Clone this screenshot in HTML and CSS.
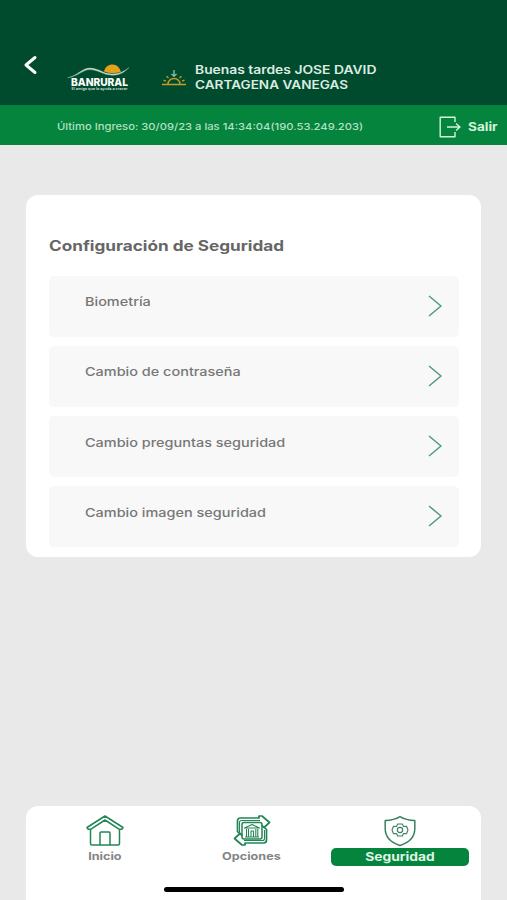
FILE: index.html
```html
<!DOCTYPE html>
<html lang="es">
<head>
<meta charset="utf-8">
<title>Configuración de Seguridad</title>
<link rel="stylesheet" href="styles.css">
</head>
<body>
<header class="header">
  <svg class="back" viewBox="0 0 16 20"><path d="M13 2.500 4 10l9 7.500"/></svg>
  <svg class="logo" viewBox="0 0 64 34">
    <path class="sun" d="M37 8.500C38 4 41.500 1.500 45.500 1.500S53 4.500 53.800 9Q45 11.500 37 8.500Z"/>
    <path class="hill" d="M.5 14.800C10 13 15 5 23 5c8 0 13 5.700 22 5.900 7 0 12-2.500 17-6.400-5 5.300-10 7.900-17 7.700C36 12 31 6.700 23 6.600 16 6.500 11 13.500.5 14.800Z"/>
    <text class="brand" x="4" y="23.300" textLength="57" lengthAdjust="spacingAndGlyphs">BANRURAL</text>
    <text class="motto" x="4.500" y="27" textLength="56" lengthAdjust="spacingAndGlyphs">El amigo que le ayuda a crecer</text>
  </svg>
  <svg class="sunset" viewBox="0 0 26 18">
    <path d="M1 15.500h24M7 15a6 5.500 0 0 1 12 0M2.500 11.200l2.500 1M5.500 7.200l2 1.800M20.500 7.200l-2 1.800M23.500 11.200l-2.500 1"/>
    <path class="arrow" d="M13 1v6M10.500 5 13 7.200 15.500 5"/>
  </svg>
  <p class="greeting"><span class="wide more">Buenas tardes JOSE DAVID</span><span class="wide">CARTAGENA VANEGAS</span></p>
</header>
<div class="session">
  <div class="last"><span class="wide">Último Ingreso: 30/09/23 a las 14:34:04(190.53.249.203)</span></div>
  <svg class="exit" viewBox="0 0 22 22"><path d="M16 6V1.200H1.200v19.600H16V16M8 11h13M17 7.500l4 3.500-4 3.500"/></svg>
  <div class="leave"><span class="wide">Salir</span></div>
</div>
<main class="card">
  <h1 class="title"><span class="wide">Configuración de Seguridad</span></h1>
  <div class="list">
    <div class="row"><span class="wide more">Biometría</span><svg class="chev" viewBox="0 0 14 22"><path d="M1 1l12 10L1 21"/></svg></div>
    <div class="row"><span class="wide more">Cambio de contraseña</span><svg class="chev" viewBox="0 0 14 22"><path d="M1 1l12 10L1 21"/></svg></div>
    <div class="row"><span class="wide more">Cambio preguntas seguridad</span><svg class="chev" viewBox="0 0 14 22"><path d="M1 1l12 10L1 21"/></svg></div>
    <div class="row"><span class="wide more">Cambio imagen seguridad</span><svg class="chev" viewBox="0 0 14 22"><path d="M1 1l12 10L1 21"/></svg></div>
  </div>
</main>
<nav class="nav">
  <div class="tab">
    <svg class="icon" viewBox="0 0 38 32"><path d="M4.500 14v14.500q0 1.500 1.500 1.500h26q1.500 0 1.500-1.500V14M1 12.500 19 1l18 11.500-1 1.700h-3L19 5 5 14.200H2ZM14 30V18q0-1 1-1h8q1 0 1 1v12"/></svg>
    <span class="label"><span class="mid">Inicio</span></span>
  </div>
  <div class="tab">
    <svg class="icon" viewBox="0 0 38 32">
      <path class="band" d="M8 19.500 4.500 16.500V6q0-3 3-3H26V1h3l7.500 6.500L31 12.500 28.500 10"/>
      <path class="band" d="M30.500 11.500 33.500 14.500V25q0 3-3 3H12v2H9L1.500 23.500 7 18.500 9.500 21"/>
      <path class="fine" d="M6.500 17V7.500q0-2 2-2H27M31.500 15v8.500q0 2-2 2H11"/>
      <rect x="9" y="7.500" width="20" height="16.500" rx="2"/>
      <path class="fine" d="M11.500 13 19 9.500l7.500 3.500ZM12 22h14M13.500 14v7.500M15.500 14v7.500M18 21.500V16h2.500v5.500M22.800 14v7.500M24.800 14v7.500"/>
    </svg>
    <span class="label"><span class="mid">Opciones</span></span>
  </div>
  <div class="tab active">
    <svg class="icon shield" viewBox="0 0 38 32">
      <path d="M19 1.700C14.500 4.400 9.500 5.400 4.200 5.600v8C4.200 22 10 27.800 19 30.500 28 27.800 33.800 22 33.800 13.600v-8C28.500 5.400 23.500 4.400 19 1.700Z"/>
      <path class="fine" d="M16.700 9h4.600l1.200 2.500 3-.2 1.500 3.700-1.500 3.700-3-.2-1.200 2.500h-4.600l-1.200-2.500-3 .2L11 15l1.500-3.700 3 .2Z"/>
      <ellipse class="fine" cx="19" cy="15" rx="2.700" ry="2.600"/>
    </svg>
    <span class="label"><span class="mid">Seguridad</span></span>
  </div>
</nav>
<div class="home-bar"></div>
</body>
</html>
```

FILE: styles.css
```css
* { box-sizing: border-box; }
body {
  margin: 0;
  height: 900px;
  display: flex;
  flex-direction: column;
  background: #e9e9e9;
  font-family: Inter, "Liberation Sans", sans-serif;
  color: #6c6c6c;
  overflow: hidden;
  position: relative;
}
svg { display: block; flex: none; fill: none; stroke-linejoin: round; overflow: visible; }
.wide { display: block; width: max-content; white-space: nowrap; transform: scaleX(1.18); transform-origin: left center; }
.wide.more { transform: scaleX(1.205); }
.header { height: 105px; flex: none; display: flex; align-items: flex-start; background: #004b2d; }
.back { width: 16px; height: 20px; margin: 55px 0 0 22px; stroke: #fff; stroke-width: 3; stroke-linecap: round; }
.logo { width: 64px; height: 34px; margin: 63px 0 0 29px; }
.sun { fill: #e5a01c; }
.hill { fill: #c5dccd; stroke: #c5dccd; stroke-width: .3; }
.brand { fill: #fff; font: 800 11px Inter, sans-serif; }
.motto { fill: #bdd3c6; font: 700 3.600px Inter, sans-serif; }
.sunset { width: 26px; height: 18px; margin: 69px 0 0 30px; stroke: #c59a2a; stroke-width: 1.400; }
.sunset .arrow { stroke: #86b8ac; }
.greeting { margin: 62.500px 0 0 7.500px; font-size: 11.500px; font-weight: 600; line-height: 15px; color: #dcebe3; }
.session { height: 40px; flex: none; display: flex; align-items: center; background: #04843c; color: #b5e0c4; }
.last { width: 382.500px; margin-left: 56.500px; font-size: 9.500px; font-weight: 500; line-height: 37px; padding-top: 3px; }
.exit { width: 22px; height: 22px; margin-top: 3px; stroke: #d3f3dc; stroke-width: 1.400; }
.leave { margin: 3px 0 0 7px; font-size: 11.500px; font-weight: 700; color: #d3f3dc; }
.card { width: 455px; height: 362px; flex: none; margin: 50px 0 0 26px; padding: 41px 22px 0 23px; border-radius: 12px; background: #fff; }
.title { margin: 0 0 19.500px; font-size: 14px; line-height: 20px; font-weight: 700; color: #666; }
.title .wide { transform: scaleX(1.225); }
.list { display: flex; flex-direction: column; gap: 9.300px; }
.row { height: 61px; padding: 0 17px 0 36px; display: flex; align-items: center; justify-content: space-between; background: #f8f8f8; border-radius: 5px; font-size: 12px; font-weight: 500; color: #777; }
.row .wide { margin-top: -9px; }
.chev { width: 14px; height: 22px; margin-top: -1px; stroke: #4f9a7b; stroke-width: 1.500; }
.nav { width: 455px; height: 94px; flex: none; margin: auto 0 0 26px; padding: 9px 12px 0 10px; display: flex; justify-content: space-between; background: #fff; border-radius: 12px 12px 0 0; }
.tab { width: 138px; display: flex; flex-direction: column; align-items: center; }
.tab:nth-child(2) { margin-left: -2px; }
.icon { width: 38px; height: 32px; stroke: #218654; stroke-width: 1.500; }
.icon .fine { stroke-width: 1.100; }
.icon .band { stroke-width: 1.700; }
.icon.shield { stroke: #397f61; }
.label { width: 138px; height: 18px; margin-top: 1px; border-radius: 5px; text-align: center; font-size: 10.500px; line-height: 18px; font-weight: 700; color: #858585; }
.mid { display: inline-block; transform: scaleX(1.2); }
.active .label { background: #04843c; color: #e0f5e6; font-size: 11.500px; }
.home-bar { position: absolute; left: 164px; bottom: 8px; width: 180px; height: 5px; border-radius: 3px; background: #000; }
```
